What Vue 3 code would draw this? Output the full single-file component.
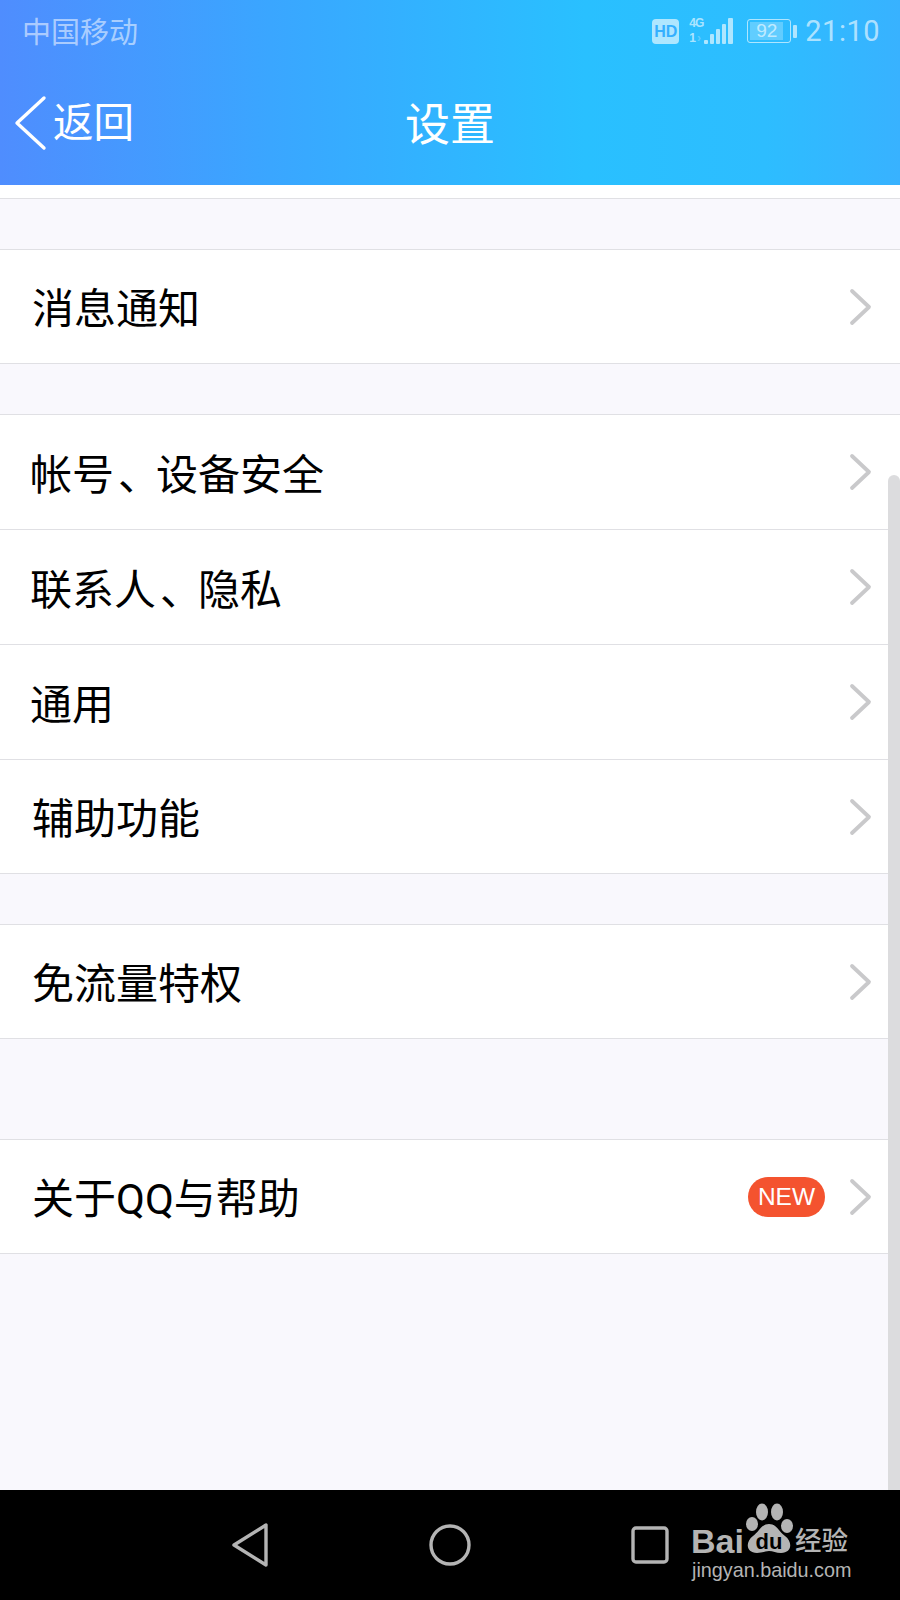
<template>
  <div class="screen">
    <header class="top-bar">
      <div class="status-bar">
        <span class="carrier">中国移动</span>
        <div class="status-right">
          <span class="hd">HD</span>
          <div class="signal">
            <div class="net">
              <span class="net-4g">4G</span>
              <span class="net-1">1<i>›</i></span>
            </div>
            <span v-for="h in signalBars" :key="h" class="bar" :style="{ height: h + 'px' }"></span>
          </div>
          <div class="battery">
            <div class="battery-body"><span class="battery-level">92</span></div>
            <span class="battery-cap"></span>
          </div>
          <span class="clock">21:10</span>
        </div>
      </div>
      <div class="nav-bar">
        <div class="back">
          <svg class="back-icon" width="34" height="56" viewBox="0 0 34 56">
            <path d="M30 3 L3 28 L30 53" fill="none" stroke="#fff" stroke-width="3.4" stroke-linecap="round" stroke-linejoin="round" />
          </svg>
          <span>返回</span>
        </div>
        <h1 class="title">设置</h1>
      </div>
    </header>

    <main class="content">
      <div class="peek"></div>
      <section v-for="(group, i) in groups" :key="i" class="group" :class="{ 'group-far': group.far }">
        <div v-for="row in group.rows" :key="row.label" class="row">
          <span class="row-label" :class="{ 'row-label-in': row.inset }">
            <template v-if="row.tail">{{ row.label }}<span class="dun">、</span>{{ row.tail }}</template>
            <template v-else>{{ row.label }}</template>
          </span>
          <span v-if="row.isNew" class="badge">NEW</span>
          <svg class="chevron" width="24" height="38" viewBox="0 0 24 38">
            <path d="M3 3 L20 19 L3 35" fill="none" stroke="#c9c9cb" stroke-width="3.8" stroke-linecap="round" stroke-linejoin="round" />
          </svg>
        </div>
      </section>
      <div class="scrollbar"></div>
    </main>

    <footer class="sys-nav">
      <svg class="sys-icon" width="40" height="44" viewBox="0 0 40 44">
        <path d="M35 2 L35 42 L3 22 Z" fill="none" stroke="#b4b4b4" stroke-width="3.4" stroke-linejoin="round" />
      </svg>
      <svg class="sys-icon" width="42" height="42" viewBox="0 0 42 42">
        <circle cx="21" cy="21" r="19" fill="none" stroke="#b4b4b4" stroke-width="3.4" />
      </svg>
      <svg class="sys-icon" width="38" height="38" viewBox="0 0 38 38">
        <rect x="2" y="2" width="34" height="34" rx="3" fill="none" stroke="#b4b4b4" stroke-width="3.4" />
      </svg>
      <div class="watermark">
        <div class="wm-logo">
          <span class="wm-bai">Bai</span>
          <svg class="wm-paw" width="48" height="50" viewBox="0 0 48 50">
            <ellipse cx="17" cy="9" rx="6" ry="8.5" fill="#b4b4b4" />
            <ellipse cx="32" cy="9" rx="6" ry="8.5" fill="#b4b4b4" />
            <ellipse cx="7" cy="21" rx="6" ry="7" fill="#b4b4b4" />
            <ellipse cx="42" cy="23" rx="6" ry="7" fill="#b4b4b4" />
            <path d="M24 21 C16 21 14 29 8 33 C0 39 1 50 12 50 C17 50 20 48 24 48 C28 48 31 50 36 50 C47 50 48 39 40 33 C34 29 32 21 24 21 Z" fill="#b4b4b4" />
            <text x="24" y="46" text-anchor="middle" class="wm-du">du</text>
          </svg>
          <span class="wm-cn">经验</span>
        </div>
        <div class="wm-url">jingyan.baidu.com</div>
      </div>
    </footer>
  </div>
</template>

<script setup>
const signalBars = [4, 10, 15, 20, 26]

const groups = [
  { rows: [{ label: '消息通知', inset: true }] },
  {
    rows: [
      { label: '帐号', tail: '设备安全' },
      { label: '联系人', tail: '隐私' },
      { label: '通用' },
      { label: '辅助功能', inset: true }
    ]
  },
  { rows: [{ label: '免流量特权', inset: true }] },
  { far: true, rows: [{ label: '关于QQ与帮助', inset: true, isNew: true }] }
]
</script>

<style>
html,
body {
  margin: 0;
  padding: 0;
}
</style>

<style scoped>
.screen {
  width: 900px;
  height: 1600px;
  display: flex;
  flex-direction: column;
  overflow: hidden;
  background: #f9f8fd;
  font-family: "Noto Sans CJK SC", "Noto Sans", sans-serif;
}

.top-bar {
  height: 185px;
  flex-shrink: 0;
  background: linear-gradient(90deg, #4f8dfe 0%, #3aa6ff 30%, #29c0ff 65%, #2dbdff 85%, #38b2ff 100%);
  color: #fff;
}

.status-bar {
  height: 62px;
  display: flex;
  justify-content: space-between;
  align-items: center;
  padding: 0 20px 0 22px;
}

.carrier {
  font-size: 29px;
  line-height: 40px;
  margin-bottom: 2px;
  color: rgba(255, 255, 255, 0.55);
}

.status-right {
  display: flex;
  align-items: center;
  color: rgba(255, 255, 255, 0.62);
}

.hd {
  width: 27px;
  height: 25px;
  border-radius: 4px;
  background: rgba(255, 255, 255, 0.62);
  color: #34b0ff;
  font: bold 16px/25px "Liberation Sans", sans-serif;
  text-align: center;
}

.signal {
  display: flex;
  align-items: flex-end;
  gap: 2px;
  height: 26px;
  margin-left: 10px;
}

.net {
  display: flex;
  flex-direction: column;
  justify-content: space-between;
  width: 13px;
  height: 26px;
  font: bold 12px/11px "Liberation Sans", sans-serif;
  letter-spacing: -1px;
}

.net-1 i {
  margin-left: 2px;
  font-style: normal;
  opacity: 0.4;
}

.bar {
  width: 4px;
  background: rgba(255, 255, 255, 0.62);
  border-radius: 1px;
}

.bar:last-child {
  width: 5px;
}

.battery {
  display: flex;
  align-items: center;
  margin-left: 14px;
}

.battery-body {
  width: 44px;
  height: 24px;
  box-sizing: border-box;
  padding: 2px;
  border: 1.5px solid rgba(255, 255, 255, 0.62);
  border-radius: 3px;
}

.battery-level {
  display: block;
  width: 33px;
  height: 100%;
  background: rgba(255, 255, 255, 0.25);
  font: 19px/17px "Liberation Sans", sans-serif;
  text-align: center;
}

.battery-cap {
  width: 4px;
  height: 13px;
  margin-left: 2px;
  background: rgba(255, 255, 255, 0.62);
  border-radius: 1px;
}

.clock {
  margin-left: 8px;
  font: 29px/34px "Roboto", sans-serif;
  letter-spacing: 0.5px;
}

.nav-bar {
  position: relative;
  height: 123px;
  display: flex;
  justify-content: center;
  align-items: center;
}

.back {
  position: absolute;
  left: 14px;
  top: 30px;
  display: flex;
  align-items: center;
  gap: 5px;
  font-size: 40.5px;
  line-height: 56px;
}

.back span {
  margin-bottom: 5px;
}

.title {
  margin: 0 0 4px;
  font-size: 45px;
  font-weight: 400;
}

.content {
  position: relative;
  flex: 1;
  display: flex;
  flex-direction: column;
}

.peek {
  height: 13px;
  background: #fff;
  border-bottom: 1px solid #e0e0e4;
}

.group {
  margin-top: 50px;
  background: #fff;
  border-top: 1px solid #e0e0e4;
  border-bottom: 1px solid #e0e0e4;
}

.group-far {
  margin-top: 100px;
}

.row {
  height: 113px;
  display: flex;
  align-items: center;
  padding: 0 27px 0 30px;
  font-family: "Roboto", "Noto Sans CJK SC", sans-serif;
  font-size: 42px;
  color: #000;
}

.row:not(:last-child) {
  height: 114px;
}

.row + .row {
  border-top: 1px solid #e0e0e4;
}

.row-label {
  flex: 1;
  margin-bottom: 2px;
}

.row-label-in {
  padding-left: 2px;
}

.dun {
  display: inline-block;
  padding-left: 4px;
  margin-right: -4px;
}

.badge {
  width: 77px;
  height: 40px;
  margin-right: 24px;
  border-radius: 20px;
  background: #f4532f;
  color: #fff;
  font: 24.5px/40px "Liberation Sans", sans-serif;
  text-align: center;
}

.scrollbar {
  position: absolute;
  right: 0;
  top: 290px;
  bottom: 0;
  width: 12px;
  background: #dcdcde;
  border-radius: 6px 6px 0 0;
}

.sys-nav {
  position: relative;
  height: 110px;
  flex-shrink: 0;
  display: flex;
  align-items: center;
  padding-left: 231px;
  gap: 158px;
  background: #000;
}

.sys-icon:nth-child(3) {
  margin-left: 2px;
}

.watermark {
  position: absolute;
  left: 691px;
  top: 13px;
  color: #b4b4b4;
}

.wm-logo {
  display: flex;
  align-items: baseline;
  height: 55px;
}

.wm-bai {
  font: bold 34px/36px "Liberation Sans", sans-serif;
}

.wm-paw {
  margin-left: 1px;
}

.wm-du {
  font: bold 22px "Liberation Sans", sans-serif;
  fill: #000;
}

.wm-cn {
  align-self: flex-end;
  font-size: 26.5px;
  font-weight: 500;
  line-height: 36px;
  margin: 0 0 1px 2px;
}

.wm-url {
  font: 19.8px/24px "Liberation Sans", sans-serif;
  padding-left: 1px;
}
</style>
